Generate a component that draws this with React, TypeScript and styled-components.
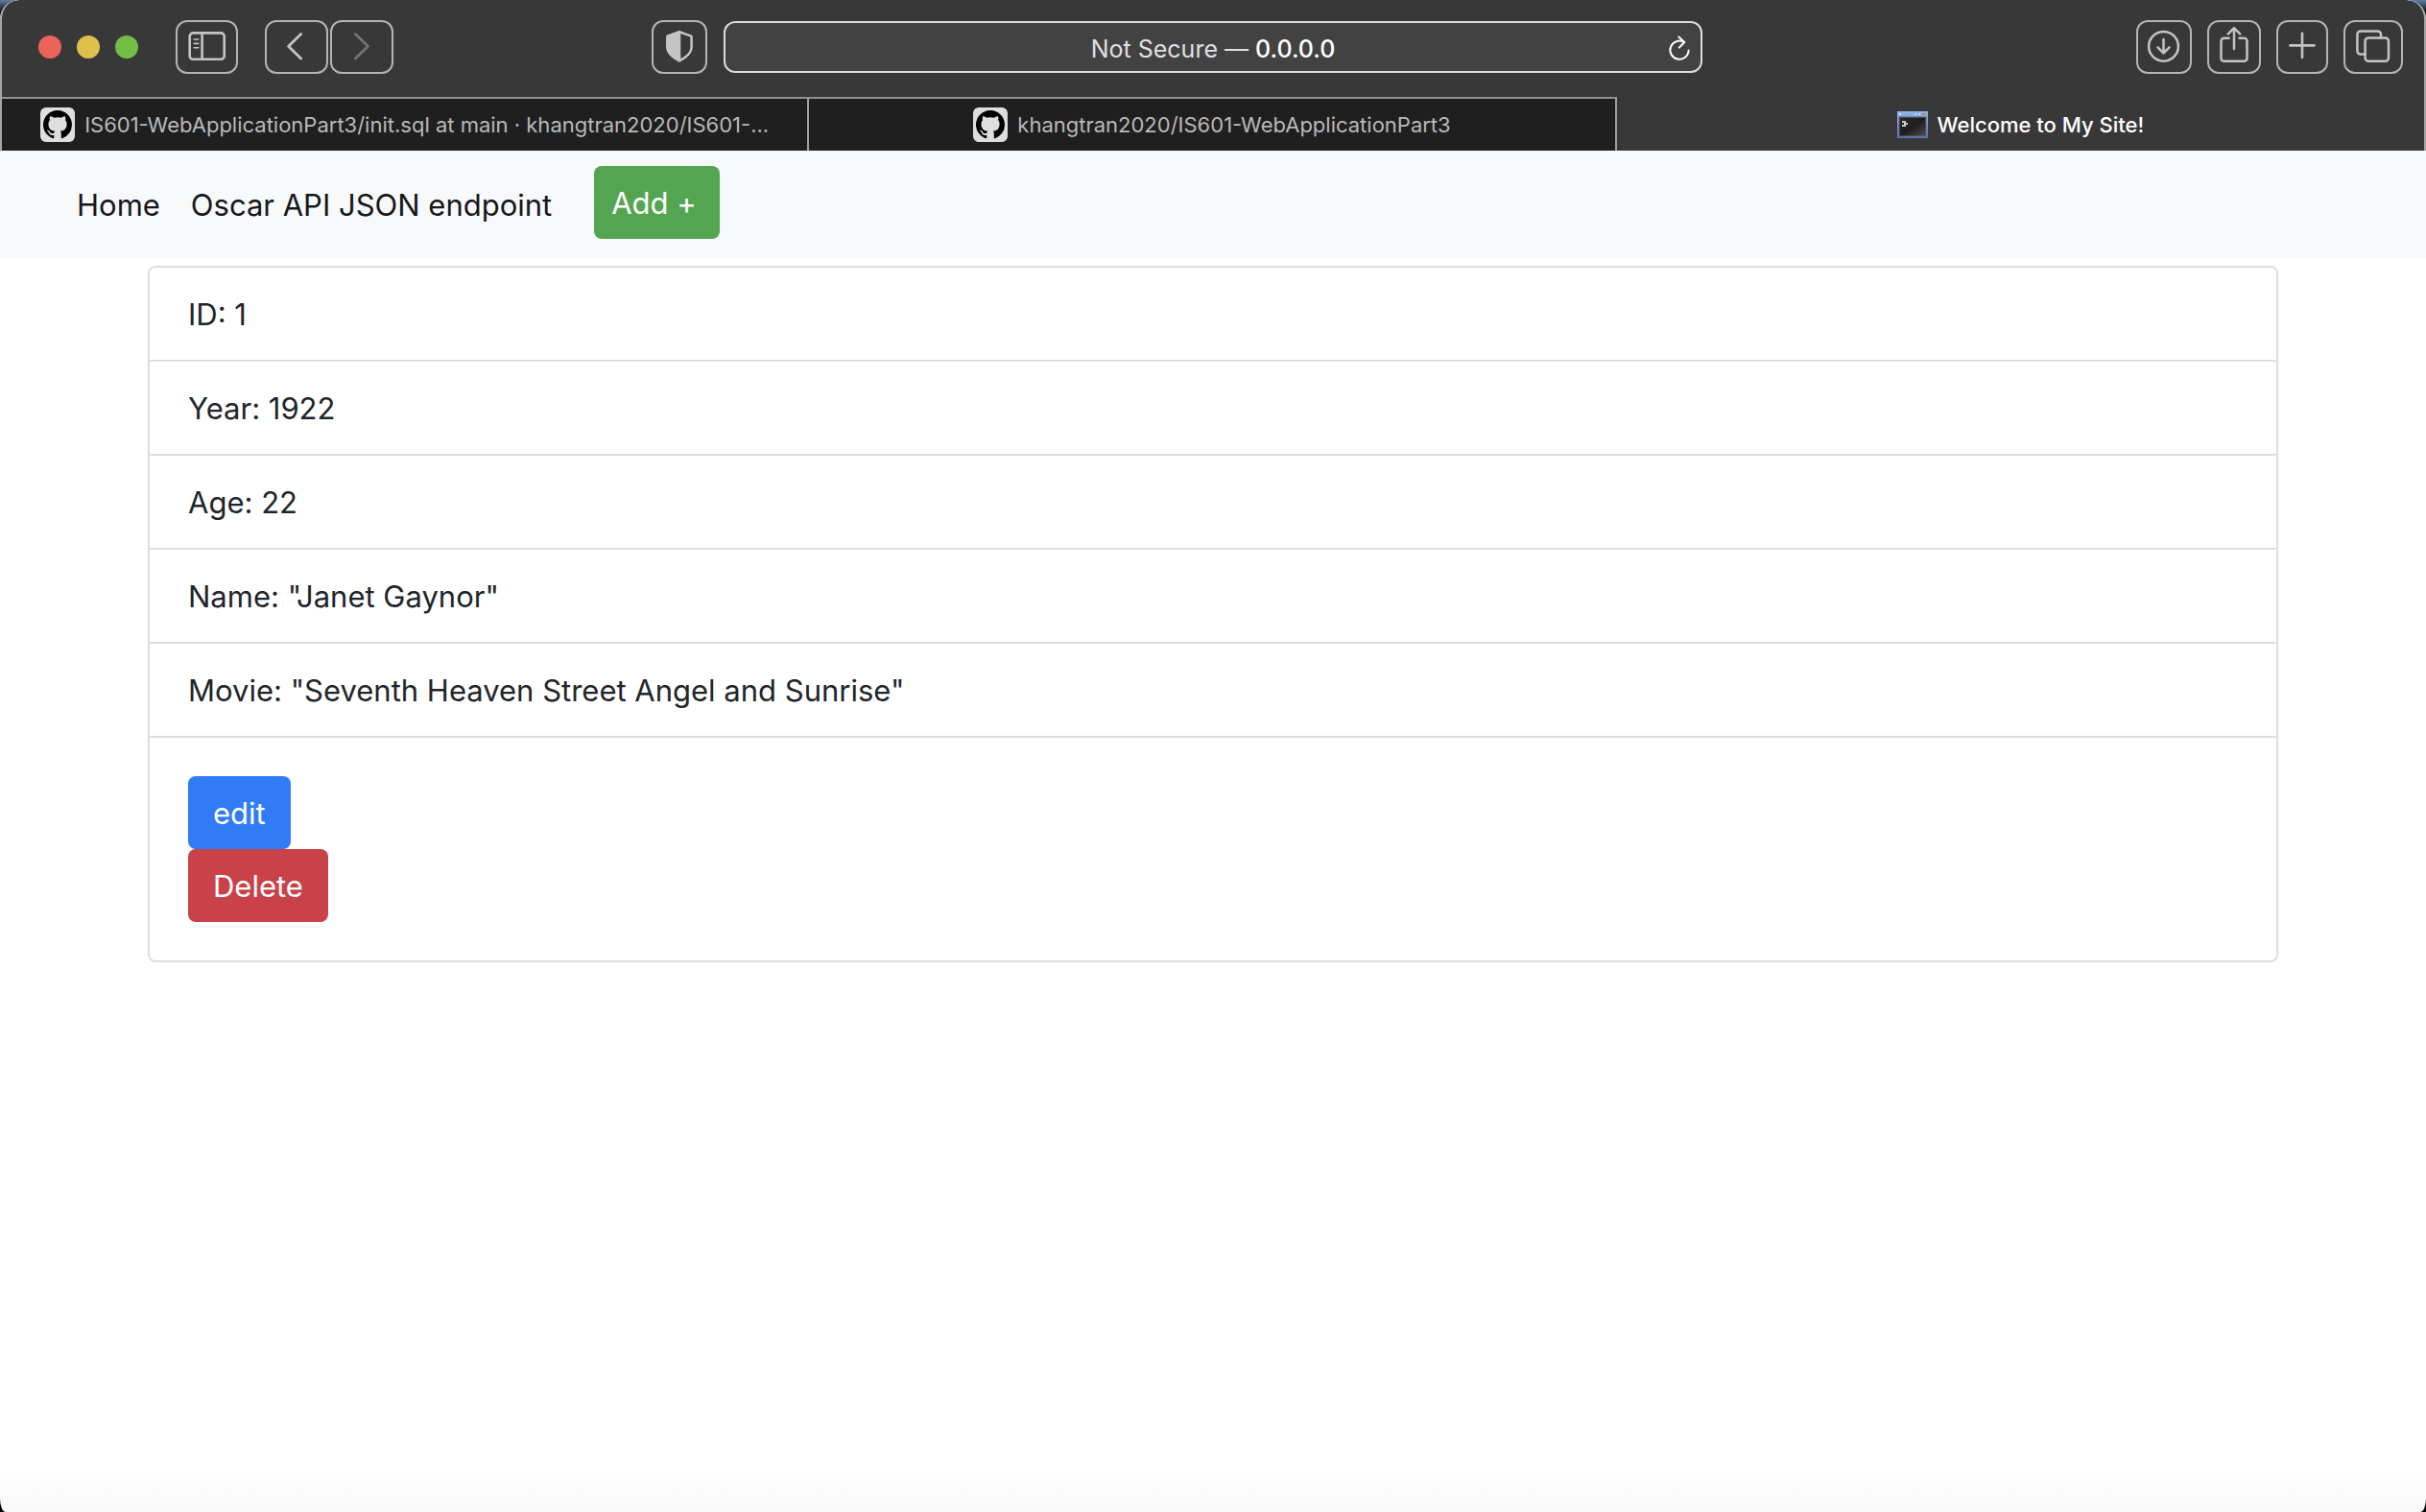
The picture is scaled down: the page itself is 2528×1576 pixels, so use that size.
import React from "react";
import styled, { createGlobalStyle, css } from "styled-components";

const GlobalStyle = createGlobalStyle`
  *, *::before, *::after { box-sizing: border-box; }
  html, body, #root { height: 100%; }
  body {
    margin: 0;
    background: linear-gradient(#5f7f9f 0, #10151c 12px, #000 40px);
    font-family: Inter, "Liberation Sans", sans-serif;
    font-size: 31px;
    line-height: 48px;
    color: #212529;
  }
  button, input { font: inherit; }
`;

const Window = styled.div`
  display: flex;
  flex-direction: column;
  min-height: 100%;
  overflow: hidden;
  border-radius: 20px 20px 6px 6px / 20px 20px 14px 14px;
  background: linear-gradient(#fff calc(100% - 40px), #f7f7f7) #fff;
`;

const Chrome = styled.header`
  border: solid #a6a6a6;
  border-width: 0 2px;
  border-radius: 20px 20px 0 0;
  background: #383838;
  overflow: hidden;
`;

const Toolbar = styled.div`
  display: grid;
  grid-template-columns: 1fr minmax(0, 1020px) 1fr;
  align-items: center;
  height: 101px;
  padding-bottom: 3px;
`;

const ToolGroup = styled.div<{ $end?: boolean }>`
  display: flex;
  align-items: center;
  ${(p) =>
    p.$end
      ? css`
          justify-content: flex-end;
          gap: 16px;
          padding-right: 22px;
        `
      : css`
          padding: 0 17px 0 38px;
        `}
`;

const Lights = styled.div`
  display: flex;
  gap: 16px;
  margin-right: 39px;
`;

const Light = styled.button<{ $color: string }>`
  width: 24px;
  height: 24px;
  padding: 0;
  border: 0;
  border-radius: 50%;
  background: ${(p) => p.$color};
`;

const ToolButton = styled.button<{ $width: number }>`
  display: flex;
  align-items: center;
  justify-content: center;
  flex: none;
  width: ${(p) => p.$width}px;
  height: 56px;
  padding: 0;
  border: 2px solid #b4b4b4;
  border-radius: 12px;
  background: none;
  color: #c4c4c4;

  &:disabled { color: #737373; }
`;

const HistoryButtons = styled.div`
  display: flex;
  gap: 2px;
  margin: 0 auto 0 28px;
`;

const AddressBar = styled.div`
  display: grid;
  grid-template-columns: 44px 1fr 44px;
  align-items: center;
  height: 54px;
  padding-top: 3px;
  border: 2px solid #dcdcdc;
  border-radius: 12px;
  background: #424242;
`;

const Address = styled.div`
  grid-column: 2;
  text-align: center;
  font-size: 25px;
  line-height: 32px;
  color: #e0e0e0;
  white-space: nowrap;

  strong { font-weight: 500; color: #fff; }
`;

const Reload = styled.button`
  display: flex;
  justify-content: center;
  padding: 0;
  border: 0;
  background: none;
  color: #fff;
`;

const Tabs = styled.nav`
  display: grid;
  grid-template-columns: repeat(3, 1fr);
`;

const Tab = styled.a<{ $active?: boolean }>`
  display: flex;
  align-items: center;
  justify-content: center;
  gap: 10px;
  height: 56px;
  padding: 0 40px;
  border-top: 2px solid #8f8f8f;
  border-right: 2px solid #a0a0a0;
  background: #1f1f1f;
  color: #b9b9b9;
  font-size: 22px;
  line-height: 28px;
  text-decoration: none;
  white-space: nowrap;

  ${(p) =>
    p.$active &&
    css`
      border-top-color: #383838;
      border-right: 0;
      background: #383838;
      color: #fff;
      font-weight: 500;
    `}
`;

const Favicon = styled.span`
  display: flex;
  align-items: center;
  justify-content: center;
  flex: none;
  width: 36px;
  height: 36px;
  border-radius: 6px;
  background: #dedede;
`;

const Navbar = styled.nav`
  display: flex;
  align-items: flex-start;
  padding: 16px 64px;
  background: #f8f9fb;
`;

const NavLink = styled.a`
  padding: 17px 16px 15px;
  color: #161719;
  text-decoration: none;
`;

const tones = { green: "#54a551", blue: "#327bf6", red: "#c94249" };

const Button = styled.button<{ $tone: keyof typeof tones }>`
  padding: 15px 26px 13px;
  border: 0;
  border-radius: 8px;
  background: ${(p) => tones[p.$tone]};
  color: #fff;
`;

const AddButton = styled(Button)`
  margin-left: 28px;
  padding-left: 18px;
  padding-right: 24px;
`;

const Container = styled.main`
  width: 100%;
  max-width: 2280px;
  margin: 8px auto 0;
  padding: 0 30px;
`;

const Card = styled.section`
  border: 2px solid #dedede;
  border-radius: 8px;
  background: #fff;
`;

const Fields = styled.ul`
  margin: 0;
  padding: 0;
  list-style: none;
`;

const Field = styled.li`
  padding: 25px 40px 23px;
  border-bottom: 2px solid #dedede;
`;

const Actions = styled.div`
  display: flex;
  flex-direction: column;
  align-items: flex-start;
  padding: 40px;
`;

const GitHubIcon = () => (
  <svg width="30" height="30" viewBox="0 0 16 16" fill="#000">
    <path d="M8 0C3.58 0 0 3.58 0 8c0 3.54 2.29 6.53 5.47 7.59.4.07.55-.17.55-.38 0-.19-.01-.82-.01-1.49-2.01.37-2.53-.49-2.69-.94-.09-.23-.48-.94-.82-1.13-.28-.15-.68-.52-.01-.53.63-.01 1.08.58 1.23.82.72 1.21 1.87.87 2.33.66.07-.52.28-.87.51-1.07-1.78-.2-3.64-.89-3.64-3.95 0-.87.31-1.59.82-2.15-.08-.2-.36-1.02.08-2.12 0 0 .67-.21 2.2.82.64-.18 1.32-.27 2-.27s1.36.09 2 .27c1.53-1.04 2.2-.82 2.2-.82.44 1.1.16 1.92.08 2.12.51.56.82 1.27.82 2.15 0 3.07-1.87 3.75-3.65 3.95.29.25.54.73.54 1.48 0 1.07-.01 1.93-.01 2.2 0 .21.15.46.55.38A8.01 8.01 0 0 0 16 8c0-4.42-3.58-8-8-8z" />
  </svg>
);

const TerminalIcon = () => (
  <svg width="32" height="28" viewBox="0 0 32 28">
    <defs>
      <linearGradient id="frame" x1="0" y1="0" x2="0" y2="1">
        <stop offset="0" stopColor="#8fb4e6" />
        <stop offset="1" stopColor="#5873b4" />
      </linearGradient>
      <linearGradient id="screen" x1="0" y1="0" x2="1" y2="1">
        <stop offset="0" stopColor="#2a2a2a" />
        <stop offset="0.5" stopColor="#1e1e1e" />
        <stop offset="1" stopColor="#4a4a4a" />
      </linearGradient>
    </defs>
    <rect width="32" height="28" fill="url(#frame)" />
    <rect x="2" y="2" width="2" height="2" fill="#d5e2f6" />
    <rect x="18" y="2" width="2" height="2" fill="#c3d2ea" />
    <rect x="22" y="2" width="2" height="2" fill="#c3d2ea" />
    <rect x="26" y="2" width="3" height="2" fill="#e0705e" />
    <rect x="2" y="6" width="28" height="20" fill="url(#screen)" stroke="#666a74" />
    <path d="M5 10h4v2h2v2H9v2H5v-2h2v-2H5z" fill="#c9c9c9" />
  </svg>
);

const stroke = {
  fill: "none",
  stroke: "currentColor",
  strokeLinecap: "round" as const,
  strokeLinejoin: "round" as const,
};

const SidebarIcon = () => (
  <svg width="40" height="32" viewBox="0 0 40 32" {...stroke} strokeWidth="2.6">
    <rect x="1.7" y="1.4" width="36" height="27.4" rx="3.5" />
    <path d="M14.6 1.4v27.4" />
    <path d="M6.2 8h4.600M6.200 12.400h4.600M6.200 16.800h4.600" strokeWidth="1.6" />
  </svg>
);

const BackIcon = () => (
  <svg width="20" height="32" viewBox="0 0 20 32" {...stroke} strokeWidth="2.8">
    <path d="M14.600 2.400L1.600 15.200 14.600 28" />
  </svg>
);

const ForwardIcon = () => (
  <svg width="20" height="32" viewBox="0 0 20 32" {...stroke} strokeWidth="2.8">
    <path d="M3.400 2.400l13 12.800-13 12.800" />
  </svg>
);

const ShieldIcon = () => (
  <svg width="28" height="34" viewBox="0 0.7 28 34" {...stroke} strokeWidth="2.5">
    <path d="M14 1.9c4 1.900 8 3.100 11.800 4.200.5.200.8.600.8 1.100V18c0 7.500-7 11.300-12.600 14C8.400 29.300 1.400 25.500 1.400 18V7.200c0-.5.3-.9.800-1.100C6 5 10 3.800 14 1.900z" />
    <path d="M14 1.900V32C8.400 29.300 1.400 25.500 1.400 18V7.200c0-.5.3-.9.800-1.100C6 5 10 3.800 14 1.900z" fill="currentColor" />
  </svg>
);

const ReloadIcon = () => (
  <svg width="24" height="28" viewBox="0 0 24 28" {...stroke} strokeWidth="2">
    <path d="M17 7A9.600 9.600 0 1 0 21.600 15.500" />
    <path d="M11.400 1.400l5.800 5.600-5.400 5.600" />
  </svg>
);

const DownloadIcon = () => (
  <svg width="36" height="36" viewBox="0 0 36 36" {...stroke} strokeWidth="2.5">
    <circle cx="17.500" cy="17.300" r="15.400" />
    <path d="M17.500 10v14M11.500 18.400l6 6 6-6" />
  </svg>
);

const ShareIcon = () => (
  <svg width="32" height="46" viewBox="0 0 32 46" {...stroke} strokeWidth="2.5">
    <path d="M10.500 13.700H5.500a3 3 0 0 0-3 3v18a3 3 0 0 0 3 3h21a3 3 0 0 0 3-3v-18a3 3 0 0 0-3-3h-5" />
    <path d="M16 25V3.500M9.800 9.300L16 3.200l6.200 6.100" />
  </svg>
);

const PlusIcon = () => (
  <svg width="28" height="32" viewBox="0 0 28 32" {...stroke} strokeWidth="2.6">
    <path d="M14 1.900v25M1.500 14.400h25" />
  </svg>
);

const TabsIcon = () => (
  <svg width="36" height="38" viewBox="0 0 36 38" {...stroke} strokeWidth="2.5">
    <rect x="9.600" y="9.400" width="24.400" height="24.400" rx="3.500" />
    <path d="M9.600 26.600H4.900a3.500 3.500 0 0 1-3.500-3.500V5.900a3.500 3.500 0 0 1 3.500-3.500h17.600a3.500 3.500 0 0 1 3.500 3.500v3.500" />
  </svg>
);

const fields = [
  ["ID", "1"],
  ["Year", "1922"],
  ["Age", "22"],
  ["Name", '"Janet Gaynor"'],
  ["Movie", '"Seventh Heaven Street Angel and Sunrise"'],
];

export default function App() {
  return (
    <>
      <GlobalStyle />
      <Window>
        <Chrome>
          <Toolbar>
            <ToolGroup>
              <Lights>
                <Light $color="#ec6459" aria-label="Close" />
                <Light $color="#e0c04c" aria-label="Minimize" />
                <Light $color="#72be47" aria-label="Zoom" />
              </Lights>
              <ToolButton $width={65} aria-label="Sidebar"><SidebarIcon /></ToolButton>
              <HistoryButtons>
                <ToolButton $width={66} aria-label="Back"><BackIcon /></ToolButton>
                <ToolButton $width={66} aria-label="Forward" disabled><ForwardIcon /></ToolButton>
              </HistoryButtons>
              <ToolButton $width={58} aria-label="Privacy report"><ShieldIcon /></ToolButton>
            </ToolGroup>
            <AddressBar>
              <Address>Not Secure — <strong>0.0.0.0</strong></Address>
              <Reload aria-label="Reload"><ReloadIcon /></Reload>
            </AddressBar>
            <ToolGroup $end>
              <ToolButton $width={58} aria-label="Downloads"><DownloadIcon /></ToolButton>
              <ToolButton $width={56} aria-label="Share"><ShareIcon /></ToolButton>
              <ToolButton $width={54} aria-label="New tab"><PlusIcon /></ToolButton>
              <ToolButton $width={62} aria-label="Tab overview"><TabsIcon /></ToolButton>
            </ToolGroup>
          </Toolbar>
          <Tabs>
            <Tab href="#init">
              <Favicon><GitHubIcon /></Favicon>
              <span>IS601-WebApplicationPart3/init.sql at main · khangtran2020/IS601-...</span>
            </Tab>
            <Tab href="#repo">
              <Favicon><GitHubIcon /></Favicon>
              <span>khangtran2020/IS601-WebApplicationPart3</span>
            </Tab>
            <Tab href="#site" $active>
              <TerminalIcon />
              <span>Welcome to My Site!</span>
            </Tab>
          </Tabs>
        </Chrome>
        <Navbar>
          <NavLink href="#home">Home</NavLink>
          <NavLink href="#api">Oscar API JSON endpoint</NavLink>
          <AddButton $tone="green">Add +</AddButton>
        </Navbar>
        <Container>
          <Card>
            <Fields>
              {fields.map(([label, value]) => (
                <Field key={label}>{label}: {value}</Field>
              ))}
            </Fields>
            <Actions>
              <Button $tone="blue">edit</Button>
              <Button $tone="red">Delete</Button>
            </Actions>
          </Card>
        </Container>
      </Window>
    </>
  );
}
